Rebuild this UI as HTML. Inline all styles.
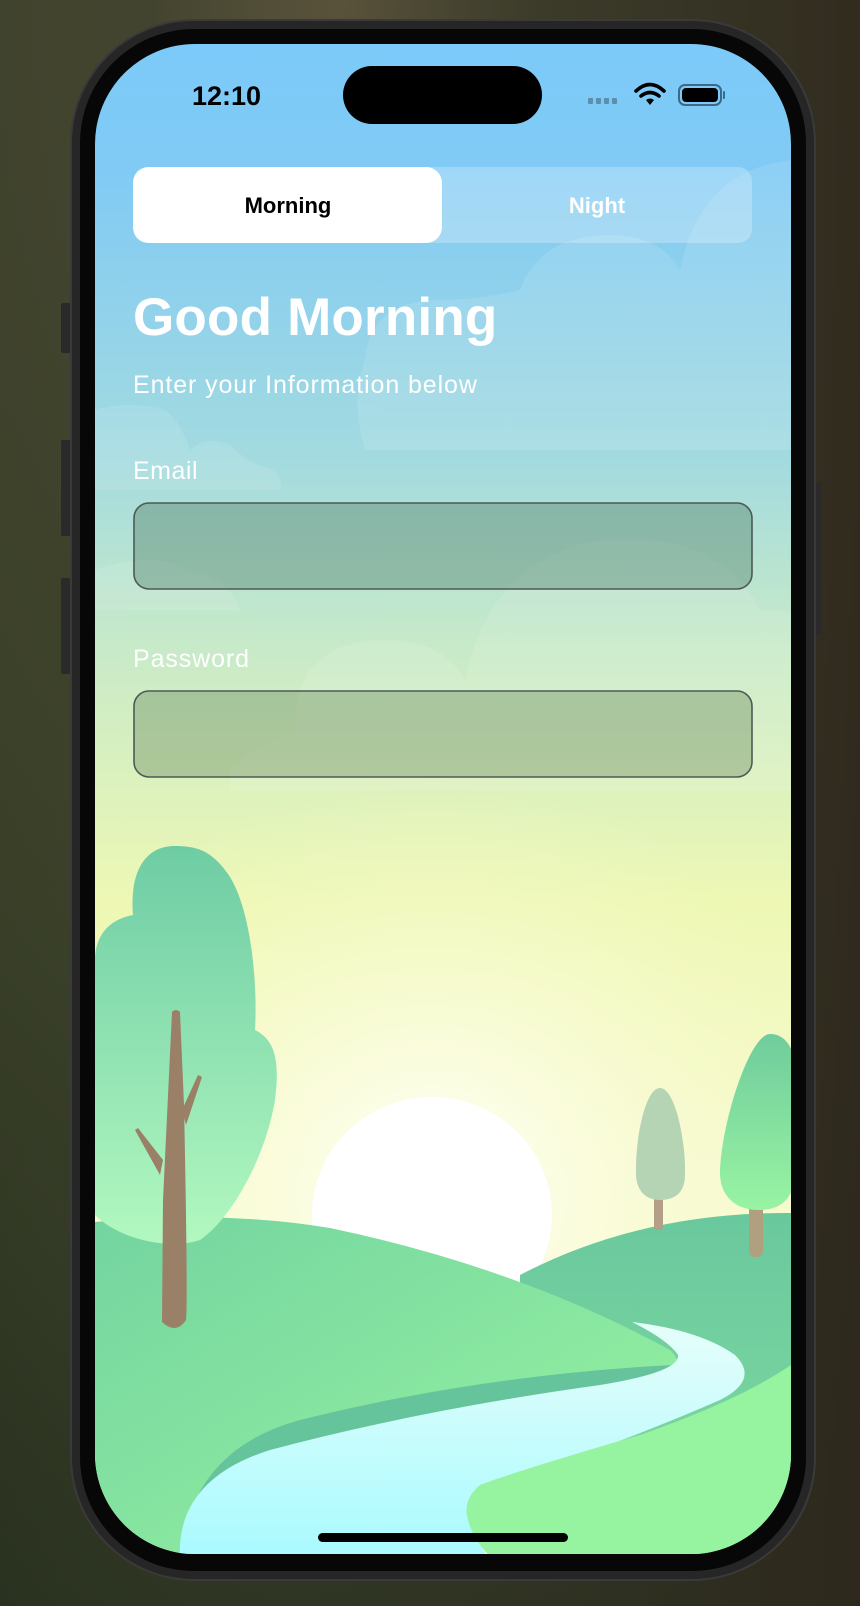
<!DOCTYPE html>
<html><head><meta charset="utf-8"><style>
html,body{margin:0;padding:0;width:860px;height:1606px;overflow:hidden;background:#2e3324;font-family:"Liberation Sans",sans-serif}
</style></head><body>
<svg width="860" height="1606" viewBox="0 0 860 1606" xmlns="http://www.w3.org/2000/svg" style="position:absolute;left:0;top:0">
<defs>
<radialGradient id="bg" cx="0.4" cy="0.0" r="1.1">
<stop offset="0" stop-color="#6a5e44"/><stop offset="0.2" stop-color="#454530"/><stop offset="0.6" stop-color="#3a4028"/><stop offset="1" stop-color="#28301f"/></radialGradient>
<linearGradient id="bgr" x1="0" x2="1"><stop offset="0" stop-color="#3a4530" stop-opacity="0"/><stop offset="1" stop-color="#2f261c" stop-opacity="0.8"/></linearGradient>
<linearGradient id="sky" x1="0" y1="0" x2="0" y2="1">
<stop offset="0" stop-color="#7ccaf9"/><stop offset="0.08" stop-color="#80caf5"/><stop offset="0.27" stop-color="#a2dae0"/><stop offset="0.4" stop-color="#c8eac8"/><stop offset="0.57" stop-color="#eef8b4"/><stop offset="0.75" stop-color="#f8fad2"/><stop offset="1" stop-color="#f8fad2"/></linearGradient>
<radialGradient id="glow" cx="432" cy="1190" r="420" gradientUnits="userSpaceOnUse">
<stop offset="0" stop-color="#ffffff" stop-opacity="0.9"/><stop offset="0.35" stop-color="#fbfde0" stop-opacity="0.8"/><stop offset="1" stop-color="#f4f8c0" stop-opacity="0"/></radialGradient>
<linearGradient id="hillL" x1="0" y1="0" x2="1" y2="1"><stop offset="0" stop-color="#74d4a0"/><stop offset="1" stop-color="#98f5a0"/></linearGradient>
<linearGradient id="hillR" x1="0" y1="0" x2="0" y2="1"><stop offset="0" stop-color="#6ac89e"/><stop offset="1" stop-color="#80dca0"/></linearGradient>
<linearGradient id="river" x1="0" y1="0" x2="0" y2="1"><stop offset="0" stop-color="#e6fefa"/><stop offset="1" stop-color="#a8faff"/></linearGradient>
<linearGradient id="tree" x1="0" y1="0" x2="0" y2="1"><stop offset="0" stop-color="#6ecca4"/><stop offset="1" stop-color="#b2f8c0"/></linearGradient>
<linearGradient id="tree2" x1="0" y1="0" x2="0" y2="1"><stop offset="0" stop-color="#70cc9c"/><stop offset="1" stop-color="#98f4a2"/></linearGradient>
<clipPath id="scr"><rect x="95" y="44" width="696" height="1510" rx="100"/></clipPath>
</defs>
<rect width="860" height="1606" fill="url(#bg)"/>
<rect width="860" height="1606" fill="url(#bgr)"/>
<rect x="61" y="303" width="10" height="50" rx="2" fill="#2a2a2a"/>
<rect x="61" y="440" width="10" height="96" rx="2" fill="#2a2a2a"/>
<rect x="61" y="578" width="10" height="96" rx="2" fill="#2a2a2a"/>
<rect x="814" y="483" width="8" height="152" rx="2" fill="#2a2a2a"/>
<rect x="70" y="19" width="746" height="1562" rx="124" fill="#3a3a3a"/>
<rect x="72" y="21" width="742" height="1558" rx="122" fill="#262626"/>
<rect x="80" y="29" width="726" height="1542" rx="114" fill="#070707"/>
<g clip-path="url(#scr)">
<rect x="95" y="44" width="696" height="1510" fill="url(#sky)"/>
<circle cx="432" cy="1190" r="420" fill="url(#glow)"/>
<g fill="#ffffff" opacity="0.11">
<path d="M365 360 Q370 300 440 300 Q480 300 520 290 Q540 235 610 235 Q660 235 680 270 Q700 170 791 160 L791 450 L365 450 Q350 400 365 360 Z"/>
<path d="M95 410 Q130 400 165 410 Q180 420 190 450 Q205 435 230 445 Q245 460 258 465 Q285 470 280 490 L95 490 Z"/>
<path d="M95 570 Q150 550 190 570 Q230 580 240 610 L95 610 Z"/>
<path d="M230 770 Q260 740 295 735 Q290 650 370 640 Q440 635 465 680 Q490 560 600 540 Q720 530 760 610 L791 612 L791 790 L230 790 Z"/>
</g>
<ellipse cx="432" cy="1215" rx="120" ry="118" fill="#ffffff"/>
<path d="M520 1275 Q640 1212 791 1213 L791 1560 L520 1560 Z" fill="url(#hillR)"/>
<rect x="654" y="1190" width="9" height="40" rx="3" fill="#b4a088"/>
<path d="M660 1088 C645 1088 635 1140 636 1175 C637 1195 650 1200 660 1200 C672 1200 685 1195 685 1175 C686 1140 675 1088 660 1088 Z" fill="#b4d4b4"/>
<rect x="749" y="1200" width="14" height="57" rx="6" fill="#b0a080"/>
<path d="M770 1034 C750 1034 722 1120 720 1170 C719 1200 740 1210 758 1210 C780 1210 795 1200 795 1170 L795 1060 C790 1040 780 1034 770 1034 Z" fill="url(#tree2)"/>
<path d="M95 1222 Q220 1210 330 1228 Q520 1268 670 1350 Q690 1370 660 1380 Q500 1400 380 1410 Q210 1430 180 1560 L95 1560 Z" fill="url(#hillL)"/>
<path d="M180 1560 Q190 1450 300 1420 Q480 1375 672 1365 Q640 1385 560 1395 Q420 1415 330 1440 Q230 1470 225 1560 Z" fill="#66c49c"/>
<path d="M632 1322 Q700 1330 735 1355 Q760 1380 720 1400 Q640 1435 540 1470 Q460 1510 478 1540 L488 1560 L180 1560 Q175 1480 270 1450 Q420 1410 600 1385 Q680 1372 678 1355 Q668 1340 632 1322 Z" fill="url(#river)"/>
<path d="M791 1365 Q740 1400 640 1435 Q520 1470 480 1485 Q462 1500 468 1520 Q475 1545 495 1560 L791 1560 Z" fill="#96f4a0"/>
<path d="M175 846 C140 846 130 880 133 915 C105 920 95 940 95 960 L95 1215 C120 1240 170 1250 200 1240 C230 1220 265 1160 275 1100 C280 1060 275 1040 255 1030 C258 980 250 900 225 870 C210 850 195 846 175 846 Z" fill="url(#tree)"/>
<path d="M182 1110 L198 1075 L202 1077 L186 1125 Z" fill="#9b8068"/>
<path d="M160 1175 L135 1130 L138 1128 L163 1160 Z" fill="#9b8068"/>
<path d="M172 1012 Q176 1008 180 1012 L184 1105 Q188 1300 186 1320 Q176 1335 162 1322 L163 1200 Z" fill="#9b8068"/>
</g>
<text x="192" y="105" font-weight="700" font-size="27" fill="#000">12:10</text>
<rect x="343" y="66" width="199" height="58" rx="29" fill="#000"/>
<g fill="#5a8fb0"><rect x="588" y="98" width="5" height="6" rx="1"/><rect x="596" y="98" width="5" height="6" rx="1"/><rect x="604" y="98" width="5" height="6" rx="1"/><rect x="612" y="98" width="5" height="6" rx="1"/></g>
<g fill="none" stroke="#000" stroke-width="3.6" stroke-linecap="round">
<path d="M636 91 Q650 78 664 91"/><path d="M641 96 Q650 89 659 96"/></g>
<path d="M646 100 L650 105 L654 100 Q650 97 646 100 Z" fill="#000"/>
<rect x="679" y="85" width="42" height="20" rx="6" fill="none" stroke="#3a6a8a" stroke-width="2"/>
<rect x="682" y="88" width="36" height="14" rx="4" fill="#000"/>
<rect x="723" y="91" width="2" height="8" rx="1" fill="#3a6a8a"/>
<rect x="133" y="167" width="619" height="76" rx="14" fill="#ffffff" fill-opacity="0.25"/>
<rect x="133" y="167" width="309" height="76" rx="16" fill="#ffffff"/>
<text x="288" y="213" text-anchor="middle" font-weight="700" font-size="22" fill="#000">Morning</text>
<text x="597" y="213" text-anchor="middle" font-weight="700" font-size="22" fill="#ffffff">Night</text>
<text x="133" y="335" font-weight="700" font-size="53" letter-spacing="0.2" fill="#ffffff">Good Morning</text>
<text x="133" y="393" font-size="25" letter-spacing="0.9" fill="#ffffff">Enter your Information below</text>
<text x="133" y="479" font-size="25" letter-spacing="0.5" fill="#ffffff">Email</text>
<rect x="134" y="503" width="618" height="86" rx="15" fill="#5a8870" fill-opacity="0.45" stroke="#4c5a54" stroke-width="1.6"/>
<text x="133" y="667" font-size="25" letter-spacing="0.9" fill="#ffffff">Password</text>
<rect x="134" y="691" width="618" height="86" rx="15" fill="#6a8a60" fill-opacity="0.4" stroke="#4c5a54" stroke-width="1.6"/>
<rect x="318" y="1533" width="250" height="9" rx="4.5" fill="#000"/>
</svg>
</body></html>
